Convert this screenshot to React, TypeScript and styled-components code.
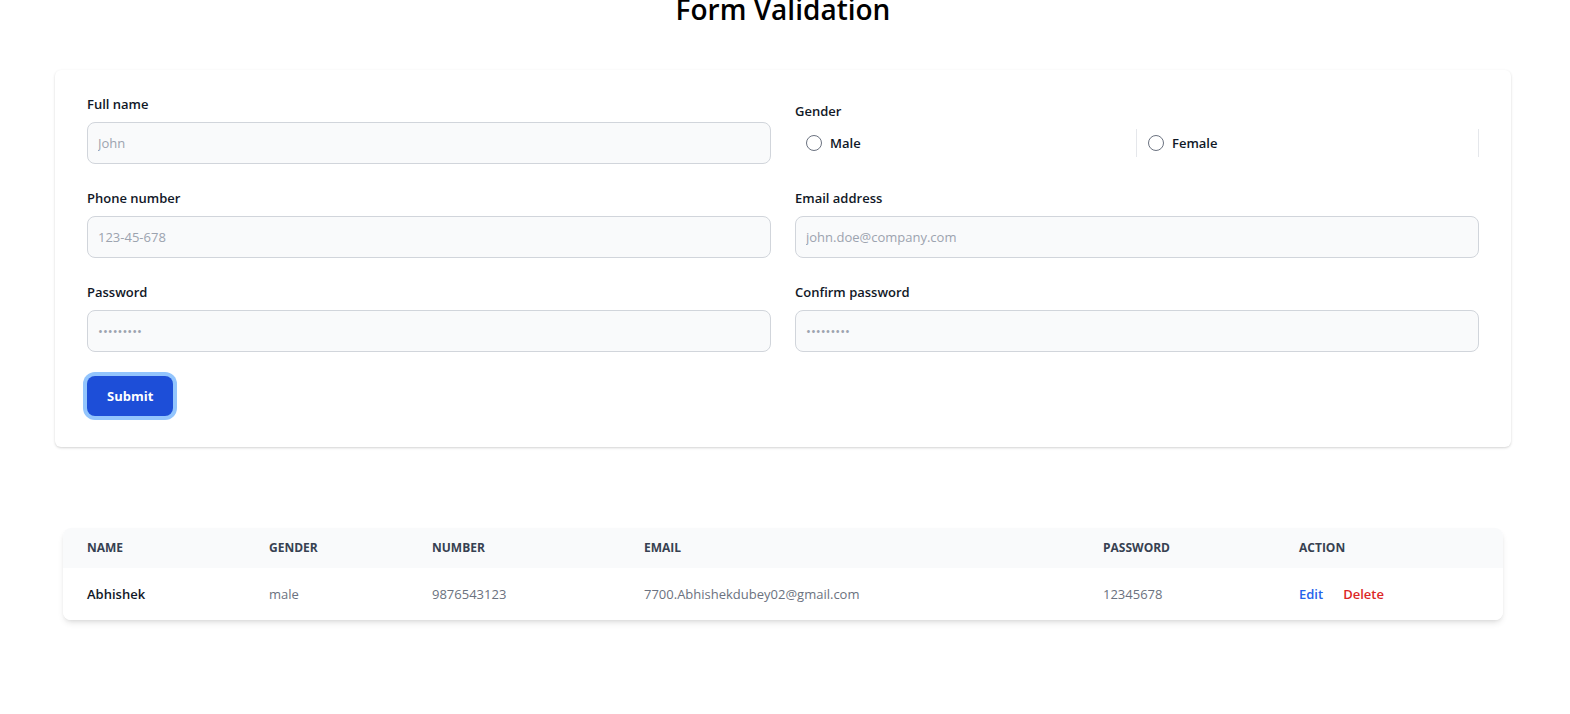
import React from 'react';
import styled, { createGlobalStyle } from 'styled-components';

const GlobalStyle = createGlobalStyle`
  * { box-sizing: border-box; }
  body {
    margin: 0;
    background: #ffffff;
    font-family: "Open Sans", "Noto Sans", sans-serif;
    color: #111827;
  }
`;

const Page = styled.div`
  width: 1570px;
  height: 714px;
  overflow: hidden;
  padding-left: 55px;
`;

const Title = styled.h1`
  margin: -11px 0 0;
  width: 1456px;
  text-align: center;
  font-size: 28px;
  line-height: 40px;
  font-weight: 600;
  color: #000000;
`;

const Card = styled.form`
  width: 1456px;
  margin-top: 41px;
  padding: 24px 32px 31px;
  background: #ffffff;
  border-radius: 6px;
  box-shadow: 0 1px 3px rgba(0, 0, 0, 0.12), 0 1px 2px rgba(0, 0, 0, 0.06);
`;

const Grid = styled.div`
  display: grid;
  grid-template-columns: 684px 684px;
  column-gap: 24px;
  row-gap: 24px;
  align-items: center;
`;

const Field = styled.div`
  display: flex;
  flex-direction: column;
`;

const Label = styled.label`
  font-size: 13px;
  line-height: 20px;
  font-weight: 600;
  color: #111827;
  margin-bottom: 8px;
`;

const Input = styled.input`
  height: 42px;
  padding: 0 10px;
  border: 1px solid #d1d5db;
  border-radius: 8px;
  background: #f9fafb;
  font-family: inherit;
  font-size: 13px;
  color: #111827;
  outline: none;

  &::placeholder {
    color: #9ca3af;
  }
`;

const RadioList = styled.ul`
  display: flex;
  margin: 0;
  padding: 0;
  list-style: none;
`;

const RadioItem = styled.li`
  flex: 1;
  height: 28px;
  display: flex;
  align-items: center;
  padding-left: 11px;
  border-right: 1px solid #e5e7eb;
`;

const Radio = styled.span`
  width: 16px;
  height: 16px;
  border-radius: 50%;
  border: 1px solid #6b7280;
  background: #ffffff;
`;

const RadioText = styled.span`
  margin-left: 8px;
  font-size: 13px;
  font-weight: 600;
  color: #111827;
`;

const Button = styled.button`
  margin-top: 24px;
  height: 40px;
  padding: 0 20px;
  border: none;
  border-radius: 8px;
  background: #1d4ed8;
  color: #ffffff;
  font-family: inherit;
  font-size: 13px;
  font-weight: 700;
  box-shadow: 0 0 0 4px #93c5fd;
`;

const TableWrap = styled.div`
  width: 1440px;
  margin: 81px 0 0 8px;
  border-radius: 8px;
  overflow: hidden;
  box-shadow: 0 4px 6px -1px rgba(0, 0, 0, 0.1), 0 2px 4px -2px rgba(0, 0, 0, 0.1);
`;

const Table = styled.table`
  width: 100%;
  border-collapse: collapse;
  table-layout: fixed;
  text-align: left;
`;

const Col = styled.col<{ w: number }>`
  width: ${(p) => p.w}px;
`;

const Th = styled.th`
  padding: 12px 0 12px 24px;
  background: #f9fafb;
  font-size: 12px;
  line-height: 16px;
  font-weight: 700;
  text-transform: uppercase;
  color: #374151;
`;

const Td = styled.td<{ strong?: boolean }>`
  padding: 16px 0 16px 24px;
  font-size: 13px;
  line-height: 20px;
  font-weight: ${(p) => (p.strong ? 600 : 400)};
  color: ${(p) => (p.strong ? '#111827' : '#6b7280')};
  background: #ffffff;
  white-space: nowrap;
`;

const Action = styled.a<{ tone: 'edit' | 'delete' }>`
  font-weight: 600;
  text-decoration: none;
  color: ${(p) => (p.tone === 'edit' ? '#2563eb' : '#dc2626')};
  & + & {
    margin-left: 20px;
  }
`;

const columns = [
  { label: 'Name', w: 182 },
  { label: 'Gender', w: 163 },
  { label: 'Number', w: 212 },
  { label: 'Email', w: 459 },
  { label: 'Password', w: 196 },
  { label: 'Action', w: 228 },
];

const rows = [
  { name: 'Abhishek', gender: 'male', number: '9876543123', email: '7700.Abhishekdubey02@gmail.com', password: '12345678' },
];

export default function App() {
  return (
    <Page>
      <GlobalStyle />
      <Title>Form Validation</Title>
      <Card onSubmit={(e) => e.preventDefault()}>
        <Grid>
          <Field>
            <Label>Full name</Label>
            <Input placeholder="John" />
          </Field>
          <Field>
            <Label>Gender</Label>
            <RadioList>
              <RadioItem>
                <Radio />
                <RadioText>Male</RadioText>
              </RadioItem>
              <RadioItem>
                <Radio />
                <RadioText>Female</RadioText>
              </RadioItem>
            </RadioList>
          </Field>
          <Field>
            <Label>Phone number</Label>
            <Input placeholder="123-45-678" />
          </Field>
          <Field>
            <Label>Email address</Label>
            <Input placeholder="john.doe@company.com" />
          </Field>
          <Field>
            <Label>Password</Label>
            <Input placeholder="•••••••••" />
          </Field>
          <Field>
            <Label>Confirm password</Label>
            <Input placeholder="•••••••••" />
          </Field>
        </Grid>
        <Button type="submit">Submit</Button>
      </Card>
      <TableWrap>
        <Table>
          <colgroup>
            {columns.map((c) => (
              <Col key={c.label} w={c.w} />
            ))}
          </colgroup>
          <thead>
            <tr>
              {columns.map((c) => (
                <Th key={c.label}>{c.label}</Th>
              ))}
            </tr>
          </thead>
          <tbody>
            {rows.map((r) => (
              <tr key={r.email}>
                <Td strong>{r.name}</Td>
                <Td>{r.gender}</Td>
                <Td>{r.number}</Td>
                <Td>{r.email}</Td>
                <Td>{r.password}</Td>
                <Td>
                  <Action tone="edit" href="#">Edit</Action>
                  <Action tone="delete" href="#">Delete</Action>
                </Td>
              </tr>
            ))}
          </tbody>
        </Table>
      </TableWrap>
    </Page>
  );
}
